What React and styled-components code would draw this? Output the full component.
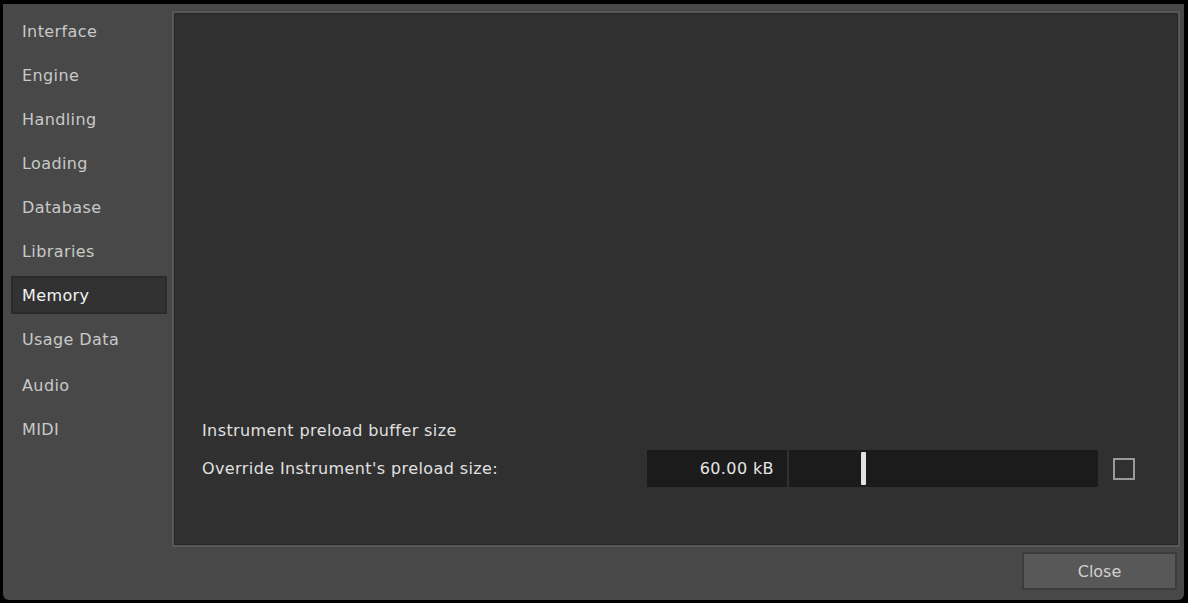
import React, { useState } from "react";
import styled, { createGlobalStyle } from "styled-components";

const Global = createGlobalStyle`
  html, body {
    margin: 0;
    padding: 0;
    background: #000;
  }
  body {
    font-family: "DejaVu Sans", "Liberation Sans", sans-serif;
    font-size: 16px;
    letter-spacing: 0.4px;
  }
`;

const Window = styled.div`
  margin: 4px 0 0 3px;
  width: 1181px;
  height: 596px;
  box-sizing: border-box;
  background: #484848;
  border-radius: 0 0 6px 6px;
  padding: 7px 4px 10px 8px;
  display: flex;
  flex-direction: column;
`;

const Body = styled.div`
  flex: 1;
  display: flex;
  gap: 5px;
  min-height: 0;
`;

const Sidebar = styled.nav`
  width: 156px;
  padding-top: 1px;
  display: flex;
  flex-direction: column;
  gap: 6px;
`;

const NavItem = styled.div`
  height: 38px;
  box-sizing: border-box;
  display: flex;
  align-items: center;
  padding-left: 9px;
  margin-top: ${(p) => (p.$shift ? "2px" : "0")};
  color: ${(p) => (p.$active ? "#f4f4f4" : "#c9c9c9")};
  background: ${(p) => (p.$active ? "#323232" : "transparent")};
  border: 2px solid ${(p) => (p.$active ? "#2a2a2a" : "transparent")};
  cursor: default;
`;

const Panel = styled.section`
  flex: 1;
  background: #303030;
  border: 2px solid #575757;
  box-shadow: inset 0 0 0 1px #262626;
  display: flex;
  flex-direction: column;
  justify-content: flex-end;
  padding: 0 43px 58px 28px;
`;

const Heading = styled.div`
  color: #e0e0e0;
  height: 22px;
  display: flex;
  align-items: center;
  margin-bottom: 9px;
`;

const Row = styled.div`
  display: flex;
  align-items: center;
  height: 37px;
`;

const Label = styled.div`
  color: #e0e0e0;
  flex: 1;
`;

const ValueBox = styled.div`
  width: 140px;
  height: 100%;
  background: #1b1b1b;
  color: #e6e6e6;
  display: flex;
  align-items: center;
  justify-content: flex-end;
  padding-right: 13px;
  box-sizing: border-box;
`;

const Track = styled.div`
  position: relative;
  width: 309px;
  height: 100%;
  margin-left: 2px;
  background: #1b1b1b;
`;

const Thumb = styled.div`
  position: absolute;
  top: 2px;
  bottom: 2px;
  width: 5px;
  background: #e2e2e2;
  border-radius: 1px;
`;

const Check = styled.div`
  width: 22px;
  height: 22px;
  box-sizing: border-box;
  margin-left: 15px;
  border: 2px solid #9a9a9a;
`;

const Footer = styled.div`
  display: flex;
  justify-content: flex-end;
  padding-top: 5px;
`;

const Button = styled.button`
  width: 155px;
  height: 38px;
  margin-right: 3px;
  background: #585858;
  border: 2px solid #3c3c3c;
  color: #d0d0d0;
  font: inherit;
`;

const pages = [
  "Interface",
  "Engine",
  "Handling",
  "Loading",
  "Database",
  "Libraries",
  "Memory",
  "Usage Data",
  "Audio",
  "MIDI",
];

export default function App() {
  const [page, setPage] = useState("Memory");
  const value = 60;

  return (
    <>
      <Global />
      <Window>
        <Body>
          <Sidebar>
            {pages.map((p) => (
              <NavItem
                key={p}
                $active={p === page}
                $shift={p === "Audio"}
                onClick={() => setPage(p)}
              >
                {p}
              </NavItem>
            ))}
          </Sidebar>
          <Panel>
            <Heading>Instrument preload buffer size</Heading>
            <Row>
              <Label>Override Instrument's preload size:</Label>
              <ValueBox>{value.toFixed(2)} kB</ValueBox>
              <Track>
                <Thumb style={{ left: `${(value / 256) * 309}px` }} />
              </Track>
              <Check />
            </Row>
          </Panel>
        </Body>
        <Footer>
          <Button>Close</Button>
        </Footer>
      </Window>
    </>
  );
}
